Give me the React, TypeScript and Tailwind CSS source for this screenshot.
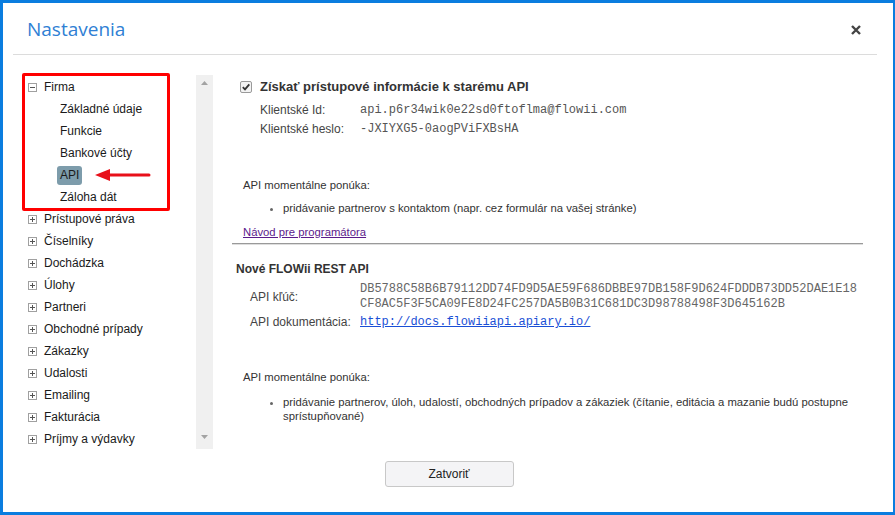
import React from "react";

const treeItems = [
  "Prístupové práva",
  "Číselníky",
  "Dochádzka",
  "Úlohy",
  "Partneri",
  "Obchodné prípady",
  "Zákazky",
  "Udalosti",
  "Emailing",
  "Fakturácia",
  "Príjmy a výdavky",
];

const firmaItems = ["Základné údaje", "Funkcie", "Bankové účty", "API", "Záloha dát"];

const ToggleBox = ({ open }: { open?: boolean }) => (
  <svg width="9" height="9" viewBox="0 0 9 9" className="shrink-0">
    <rect x="0.5" y="0.5" width="8" height="8" fill="#fff" stroke="#a0a0a0" />
    <line x1="2" y1="4.5" x2="7" y2="4.5" stroke="#555" />
    {!open && <line x1="4.5" y1="2" x2="4.5" y2="7" stroke="#555" />}
  </svg>
);

const CheckBox = () => (
  <svg width="12" height="12" viewBox="0 0 12 12" className="shrink-0">
    <rect x="0.5" y="0.5" width="11" height="11" rx="1.5" fill="#f3f3f3" stroke="#9a9a9a" />
    <path d="M2.8 6.2 L5 8.4 L9.3 3.4" fill="none" stroke="#333" strokeWidth="1.8" />
  </svg>
);

const mono = { fontFamily: '"Liberation Mono", "Courier New", monospace' };

export default function App() {
  return (
    <div
      className="relative w-[895px] h-[515px] bg-white border-t-[3px] border-l-[3px] border-r-[2px] border-b-[3px] border-[#0a7ddf] flex flex-col overflow-hidden"
      style={{ fontFamily: '"Liberation Sans", Arial, sans-serif' }}
    >
      {/* header */}
      <div className="mx-[10px] w-[864px] border-b border-[#dcdcdc] flex items-center justify-between pl-[14px] pr-[16px] pt-[14px] pb-[13px]">
        <span
          className="text-[19px] leading-6 text-[#2f80d4]"
          style={{ fontFamily: '"Open Sans", "Noto Sans", sans-serif' }}
        >
          Nastavenia
        </span>
        <svg width="10" height="10" viewBox="0 0 10 10" className="mt-[1px]">
          <path d="M1 1 L9 9 M9 1 L1 9" stroke="#444" strokeWidth="2.4" />
        </svg>
      </div>

      {/* body */}
      <div className="flex pt-[20px] h-[395px]">
        {/* tree */}
        <div className="ml-[19px] w-[174px] h-[374px] text-[12px] text-[#1a1a1a] pl-[6px] pt-[1px]">
          <div className="flex items-center gap-[7px] h-[22px]">
            <ToggleBox open />
            <span>Firma</span>
          </div>
          {firmaItems.map((item) => (
            <div key={item} className="flex items-center h-[22px] pl-[32px]">
              {item === "API" ? (
                <span className="bg-[#7d9cab] rounded-[3px] px-[3px] -ml-[3px] leading-[19px]">API</span>
              ) : (
                <span>{item}</span>
              )}
            </div>
          ))}
          {treeItems.map((item) => (
            <div key={item} className="flex items-center gap-[7px] h-[22px]">
              <ToggleBox />
              <span>{item}</span>
            </div>
          ))}
        </div>

        {/* scrollbar */}
        <div className="w-[17px] h-[374px] bg-[#f0f0f0] flex flex-col items-center justify-between py-[6px]">
          <svg width="7" height="4" viewBox="0 0 7 4">
            <path d="M0 4 L3.5 0 L7 4 Z" fill="#a3a3a3" />
          </svg>
          <svg width="7" height="4" viewBox="0 0 7 4" className="mb-[4px]">
            <path d="M0 0 L3.5 4 L7 0 Z" fill="#a3a3a3" />
          </svg>
        </div>

        {/* content */}
        <div className="flex-1 pl-[19px] pr-[30px] pt-[1px] text-[#333]">
          <div className="flex items-center gap-[8px] pl-[8px] h-[22px]">
            <CheckBox />
            <span className="text-[13px] font-bold text-[#333]">Získať prístupové informácie k starému API</span>
          </div>
          <div className="pl-[28px] text-[12px] mt-[2px]">
            <div className="flex items-center h-[19px]">
              <span className="w-[100px] text-[#444]">Klientské Id:</span>
              <span className="text-[#555]" style={mono}>
                api.p6r34wik0e22sd0ftoflma@flowii.com
              </span>
            </div>
            <div className="flex items-center h-[20px]">
              <span className="w-[100px] text-[#444]">Klientské heslo:</span>
              <span className="text-[#555]" style={mono}>
                -JXIYXG5-0aogPViFXBsHA
              </span>
            </div>
          </div>

          <div className="pl-[11px] text-[11.3px] text-[#333] mt-[38px]">
            <div className="h-[16px] leading-[16px]">API momentálne ponúka:</div>
            <ul className="mt-[8px] pl-[40px] list-disc marker:text-[#666]">
              <li className="leading-[14px]">pridávanie partnerov s kontaktom (napr. cez formulár na vašej stránke)</li>
            </ul>
            <a className="block mt-[10px] leading-[14px] text-[#5b1a8b] underline">Návod pre programátora</a>
          </div>

          <div className="mt-[4px] border-t border-[#9a9a9a] border-b border-b-[#dedede]" />

          <div className="pl-[4px] mt-[16px] text-[12px] font-bold text-[#333] leading-[16px]">Nové FLOWii REST API</div>
          <div className="pl-[18px] mt-[5px] text-[12px]">
            <div className="flex items-center">
              <span className="w-[110px] text-[#444]">API kľúč:</span>
              <span className="text-[#666] leading-[15px] w-[500px] break-all" style={mono}>
                DB5788C58B6B79112DD74FD9D5AE59F686DBBE97DB158F9D624FDDDB73DD52DAE1E18
                <br />
                CF8AC5F3F5CA09FE8D24FC257DA5B0B31C681DC3D98788498F3D645162B
              </span>
            </div>
            <div className="flex items-center mt-[2px] h-[16px]">
              <span className="w-[110px] text-[#444]">API dokumentácia:</span>
              <a className="text-[#1a4fd6] underline" style={mono}>
                http://docs.flowiiapi.apiary.io/
              </a>
            </div>
          </div>

          <div className="pl-[11px] text-[11.3px] text-[#333] mt-[39px]">
            <div className="h-[16px] leading-[16px]">API momentálne ponúka:</div>
            <ul className="mt-[10px] pl-[40px] list-disc marker:text-[#666]">
              <li className="leading-[14px]">
                pridávanie partnerov, úloh, udalostí, obchodných prípadov a zákaziek (čítanie, editácia a mazanie budú postupne
                sprístupňované)
              </li>
            </ul>
          </div>
        </div>
      </div>

      {/* footer */}
      <div className="flex justify-center pl-[2px] pt-[11px]">
        <button className="w-[129px] h-[26px] bg-[#f4f4f6] border border-[#c8c8c8] rounded-[3px] text-[12px] text-[#222]">
          Zatvoriť
        </button>
      </div>

      {/* annotations */}
      <div className="absolute left-[19px] top-[70px] w-[148px] h-[138px] border-[3px] border-[#ff0000] rounded-[2px] pointer-events-none" />
      <svg className="absolute left-[90px] top-[164px] pointer-events-none" width="58" height="16" viewBox="0 0 58 16">
        <path d="M15 8 L56 8" stroke="#e8101a" strokeWidth="3" strokeLinecap="round" />
        <path d="M2 8 L17 2 L17 14 Z" fill="#e8101a" />
      </svg>
    </div>
  );
}
